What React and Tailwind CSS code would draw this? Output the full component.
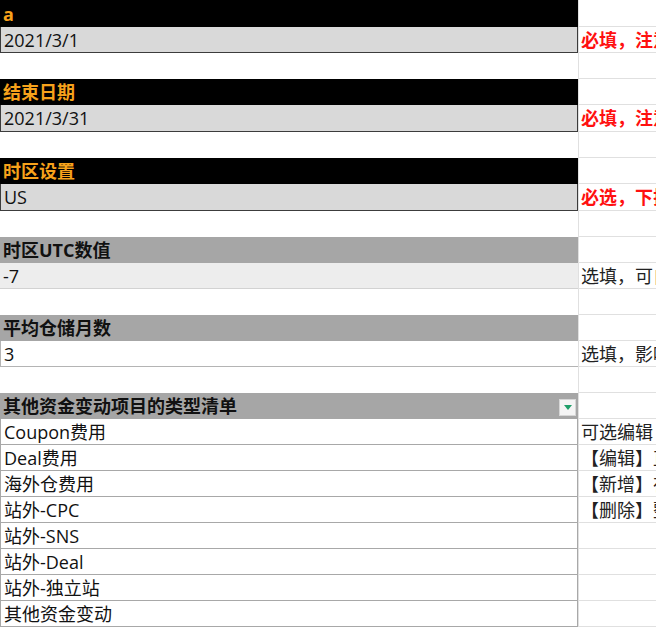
import React from "react";

const font = { fontFamily: "'Open Sans', 'Noto Sans CJK SC', sans-serif" };

// left cell looks, keyed by kind
const leftStyles = {
  black: "bg-black text-[#f7a21b] font-bold",
  input: "bg-[#d9d9d9] text-[#111] border-l border-r border-b border-[#3c3c3c]",
  blank: "bg-white",
  gray: "bg-[#a6a6a6] text-[#111] font-bold",
  light: "bg-[#ededed] text-[#111] border-b border-[#d2d2d2]",
  plain: "bg-white text-[#111] border-l border-b border-[#b4b4b4]",
  list: "bg-white text-[#111] border-l border-r border-b border-[#a8a8a8]",
};

const rows = [
  { h: "h-[27px]", kind: "black", text: "a" },
  { h: "h-[26px]", kind: "input", text: "2021/3/1", note: "必填，注意", red: true },
  { h: "h-[26px]", kind: "blank" },
  { h: "h-[26px]", kind: "black", text: "结束日期" },
  { h: "h-[27px]", kind: "input", text: "2021/3/31", note: "必填，注意", red: true },
  { h: "h-[26px]", kind: "blank" },
  { h: "h-[26px]", kind: "black", text: "时区设置" },
  { h: "h-[27px]", kind: "input", text: "US", note: "必选，下拉", red: true },
  { h: "h-[26px]", kind: "blank" },
  { h: "h-[26px]", kind: "gray", text: "时区UTC数值" },
  { h: "h-[26px]", kind: "light", text: "-7", note: "选填，可自" },
  { h: "h-[26px]", kind: "blank" },
  { h: "h-[26px]", kind: "gray", text: "平均仓储月数" },
  { h: "h-[26px]", kind: "plain", text: "3", note: "选填，影响" },
  { h: "h-[26px]", kind: "blank" },
  { h: "h-[26px]", kind: "gray", text: "其他资金变动项目的类型清单", filter: true },
  { h: "h-[26px]", kind: "list", text: "Coupon费用", note: "可选编辑" },
  { h: "h-[26px]", kind: "list", text: "Deal费用", note: "【编辑】直" },
  { h: "h-[26px]", kind: "list", text: "海外仓费用", note: "【新增】在" },
  { h: "h-[26px]", kind: "list", text: "站外-CPC", note: "【删除】整" },
  { h: "h-[26px]", kind: "list", text: "站外-SNS" },
  { h: "h-[26px]", kind: "list", text: "站外-Deal" },
  { h: "h-[26px]", kind: "list", text: "站外-独立站" },
  { h: "h-[26px]", kind: "list", text: "其他资金变动" },
];

function FilterButton() {
  return (
    <div className="absolute right-[2px] top-[6px] w-[17px] h-[17px] bg-[#f4f4f4] border border-[#d6d6d6] flex items-center justify-center">
      <svg width="8" height="5" viewBox="0 0 8 5">
        <polygon points="0,0 8,0 4,5" fill="#1e9e68" />
      </svg>
    </div>
  );
}

export default function App() {
  return (
    <div className="w-[656px] h-[627px] overflow-hidden bg-white text-[18px] leading-none" style={font}>
      {rows.map((row, i) => (
        <div key={i} className={`flex ${row.h}`}>
          <div
            className={`relative w-[578px] shrink-0 box-border flex items-center pl-[3px] whitespace-nowrap ${leftStyles[row.kind]}`}
          >
            {row.text}
            {row.filter && <FilterButton />}
          </div>
          <div className="flex-1 min-w-0 box-border border-l border-b border-[#e0e0e0] flex items-center pl-[2px] overflow-hidden whitespace-nowrap">
            {row.note && (
              <span className={row.red ? "text-[#ff1010] font-bold" : "text-[#222]"}>{row.note}</span>
            )}
          </div>
        </div>
      ))}
    </div>
  );
}
